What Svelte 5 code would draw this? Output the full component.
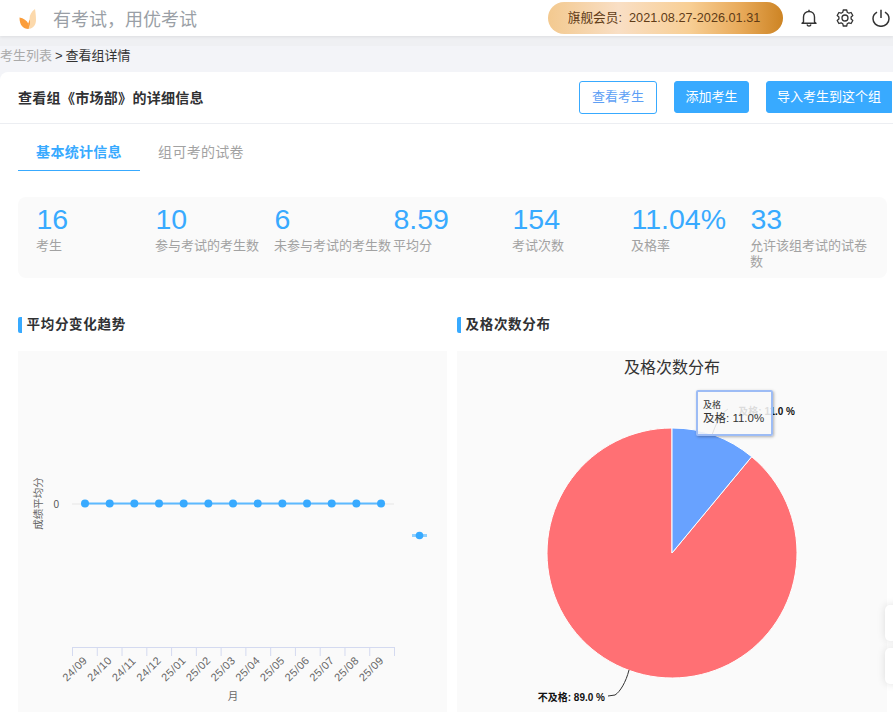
<script>
  const stats = [
    { value: '16', label: '考生' },
    { value: '10', label: '参与考试的考生数' },
    { value: '6', label: '未参与考试的考生数' },
    { value: '8.59', label: '平均分' },
    { value: '154', label: '考试次数' },
    { value: '11.04%', label: '及格率' },
    { value: '33', label: '允许该组考试的试卷数' }
  ];
  const months = ['24/09','24/10','24/11','24/12','25/01','25/02','25/03','25/04','25/05','25/06','25/07','25/08','25/09'];
  const ticks = Array.from({ length: 14 }, (_, i) => 72.5 + i * 24.77);
  const points = months.map((_, i) => 85 + i * 24.67);
</script>

<div class="page">
  <header class="topbar">
    <div class="brand">
      <svg class="logo" width="18" height="22" viewBox="0 0 18 22">
        <path d="M8.500 21C13 21 17 18 17 12C17 8 16.500 4 16 1C12.500 3.500 10.500 7 10.500 11C10.500 15 9.500 18 8.500 21Z" fill="#fcd9ac"/>
        <path d="M9.500 21C4 21 .5 17 .5 9.500C4.500 10 8 12.500 9.500 16C10.200 17.500 10 19.500 9.500 21Z" fill="#fb9d3a"/>
        <path d="M9 20.800C10.800 18 11.300 14.500 10.500 11.500C10 13 9.800 14.500 9.200 15.500C10 17.300 9.800 19.300 9 20.800Z" fill="#f98f23"/>
      </svg>
      <span class="site">有考试，用优考试</span>
    </div>
    <div class="tools">
      <div class="member">旗舰会员:&nbsp; 2021.08.27-2026.01.31</div>
      <svg class="tool bell" width="18" height="18" viewBox="0 0 18 18" fill="none" stroke="#333" stroke-width="1.400">
        <path d="M3.500 13V8C3.500 4.800 5.800 2.500 9 2.500C12.200 2.500 14.500 4.800 14.500 8V13L16 14.300H2L3.500 13Z" stroke-linejoin="round"/>
        <path d="M9 .8V2.500M7 15.500C7.300 16.600 8 17.100 9 17.100C10 17.100 10.700 16.600 11 15.500"/>
      </svg>
      <svg class="tool gear" width="18" height="18" viewBox="0 0 18 18" fill="none" stroke="#333" stroke-width="1.300">
        <path d="M7.300 1H10.700L11.200 3.200L12.900 4.200L15.100 3.500L16.800 6.500L15.100 8V10L16.800 11.500L15.100 14.500L12.900 13.800L11.200 14.800L10.700 17H7.300L6.800 14.800L5.100 13.800L2.900 14.500L1.200 11.500L2.900 10V8L1.200 6.500L2.900 3.500L5.100 4.200L6.800 3.200Z" stroke-linejoin="round"/>
        <circle cx="9" cy="9" r="3"/>
      </svg>
      <svg class="tool power" width="18" height="18" viewBox="0 0 18 18" fill="none" stroke="#333" stroke-width="1.500">
        <path d="M9 .8V9M5 3.200C2.600 4.600 1 6.900 1 9.700C1 14 4.600 17.300 9 17.300C13.400 17.300 17 14 17 9.700C17 6.900 15.400 4.600 13 3.200"/>
      </svg>
    </div>
  </header>
  <div class="strip"></div>

  <div class="crumbs"><span class="muted">考生列表</span><span class="sep">&gt;</span>查看组详情</div>

  <main class="card">
    <div class="head">
      <h1>查看组《市场部》的详细信息</h1>
      <div class="actions">
        <button class="btn outline">查看考生</button>
        <button class="btn solid">添加考生</button>
        <button class="btn solid wide">导入考生到这个组</button>
      </div>
    </div>

    <nav class="tabs">
      <span class="tab active">基本统计信息</span>
      <span class="tab">组可考的试卷</span>
    </nav>

    <section class="stats">
      {#each stats as s}
        <div class="stat">
          <div class="value">{s.value}</div>
          <div class="label">{s.label}</div>
        </div>
      {/each}
    </section>

    <section class="charts">
      <div class="chart-col">
        <h2>平均分变化趋势</h2>
        <div class="panel">
          <svg class="plot" viewBox="18 351 429 361" width="429" height="361">
            <text class="axis-name" transform="translate(42 503.500) rotate(-90)" text-anchor="middle">成绩平均分</text>
            <text class="axis-val" x="59" y="508" text-anchor="end">0</text>
            <line x1="72" x2="394" y1="504" y2="504" stroke="#e6e6e6"/>
            <line x1="85" x2="381" y1="503.500" y2="503.500" stroke="#5cb9ff" stroke-width="2"/>
            {#each points as x}
              <circle cx={x} cy="503.500" r="4" fill="#38aaff"/>
            {/each}
            <line x1="412" x2="427" y1="535.500" y2="535.500" stroke="#8fd0ff" stroke-width="3"/>
            <circle cx="419.500" cy="535.500" r="3.800" fill="#38aaff"/>
            <line x1="72" x2="394.500" y1="647.500" y2="647.500" stroke="#d4daf0"/>
            {#each ticks as x}
              <line x1={x} x2={x} y1="647" y2="656" stroke="#d4daf0"/>
            {/each}
            {#each months as m, i}
              <text class="month" transform="translate({67 + i * 24.7} 682) rotate(-45)">{m}</text>
            {/each}
            <text class="axis-name" x="233" y="700" text-anchor="middle">月</text>
          </svg>
        </div>
      </div>
      <div class="chart-col">
        <h2>及格次数分布</h2>
        <div class="panel">
          <svg class="plot" viewBox="457 351 430 361" width="430" height="361">
            <text class="pie-title" x="672" y="373" text-anchor="middle">及格次数分布</text>
            <path d="M672 553L672 428A125 125 0 1 0 751.700 456.700Z" fill="#ff7074" stroke="#fff"/>
            <path d="M672 553L672 428A125 125 0 0 1 751.700 456.700Z" fill="#68a2ff" stroke="#fff"/>
            <text class="pie-label" x="795" y="415" text-anchor="end">及格: 11.0 %</text>
            <path d="M712 435C716 424 720 414 728 409" fill="none" stroke="#333"/>
            <path d="M629 670C626 682 620 692 615 695L608 696" fill="none" stroke="#333"/>
            <text class="pie-label" x="605" y="701" text-anchor="end">不及格: 89.0 %</text>
          </svg>
          <div class="tip">
            <div class="tip-name">及格</div>
            <div class="tip-val">及格: 11.0%</div>
          </div>
        </div>
      </div>
    </section>
  </main>

  <div class="side one"></div>
  <div class="side two"></div>
</div>

<style>
  :global(html), :global(body) {
    margin: 0;
    height: 712px;
    overflow: hidden;
  }
  .page {
    position: relative;
    width: 893px;
    height: 712px;
    overflow: hidden;
    background: #f3f4f8;
    font-family: "Liberation Sans", "Noto Sans CJK SC", sans-serif;
    color: #333;
  }
  .topbar {
    height: 36px;
    background: #fff;
    display: flex;
    justify-content: space-between;
    align-items: center;
    position: relative;
    box-shadow: 0 1px 3px rgba(0, 0, 0, .08);
  }
  .strip {
    height: 10px;
    background: #eff0f3;
  }
  .brand {
    display: flex;
    align-items: center;
    padding-left: 19px;
  }
  .logo { margin-top: 1px; }
  .site {
    margin-left: 16px;
    font-size: 18px;
    color: #9a9fa6;
  }
  .tools {
    display: flex;
    align-items: center;
    height: 36px;
  }
  .member {
    width: 235px;
    height: 32px;
    line-height: 32px;
    box-sizing: border-box;
    padding-right: 3px;
    text-align: center;
    white-space: nowrap;
    border-radius: 16px;
    font-size: 12.700px;
    color: #5f3b16;
    background: linear-gradient(90deg, #f3c98f 0%, #f9dfc5 30%, #f8cf95 60%, #e8aa5a 82%, #cd8424 100%);
  }
  .tool { flex: none; }
  .bell { margin-left: 17px; }
  .gear { margin-left: 18px; }
  .power { margin-left: 18px; margin-right: 3px; }
  .crumbs {
    height: 17px;
    margin-top: 1px;
    font-size: 13px;
    line-height: 17px;
    color: #333;
  }
  .muted { color: #aaa; }
  .sep { margin: 0 3px 0 3px; }
  .card {
    margin-top: 8px;
    height: 640px;
    background: #fff;
    border-radius: 8px 0 0 0;
  }
  .head {
    height: 51px;
    display: flex;
    justify-content: space-between;
    align-items: center;
    border-bottom: 1px solid #eceef2;
    padding-left: 18px;
  }
  h1 {
    margin: 0 0 2px;
    font-size: 14px;
    font-weight: 700;
    letter-spacing: .3px;
    color: #303133;
  }
  .actions {
    display: flex;
    gap: 17px;
    align-items: center;
    margin-bottom: 2px;
  }
  .btn {
    height: 32px;
    border-radius: 3px;
    font: 13px "Liberation Sans", "Noto Sans CJK SC", sans-serif;
    border: 1px solid #38aaff;
    padding: 0 0 3px;
    width: 78px;
    background: #38aaff;
    color: #fff;
    margin-top: 1px;
  }
  .btn.outline {
    background: #fff;
    color: #5d9ff5;
    height: 33px;
  }
  .btn.solid { width: 75px; }
  .btn.wide { width: 126px; margin-right: 1px; border-radius: 3px 0 0 3px; }
  .tabs {
    display: flex;
    margin-left: 18px;
    height: 47px;
  }
  .tab {
    width: 122px;
    height: 47px;
    line-height: 56px;
    box-sizing: border-box;
    text-align: center;
    font-size: 14px;
    letter-spacing: .3px;
    color: #a2a2a2;
  }
  .tab.active {
    color: #38aaff;
    font-weight: 700;
    border-bottom: 1px solid #38aaff;
  }
  .stats {
    margin: 26px 6px 0 18px;
    height: 81px;
    background: #fafafa;
    border-radius: 8px;
    padding-left: 19px;
    display: grid;
    grid-template-columns: repeat(7, 119px);
    box-sizing: border-box;
  }
  .value {
    margin: 7px 0 0 -.5px;
    font-size: 28.500px;
    line-height: 30px;
    color: #38aaff;
  }
  .label {
    font-size: 13px;
    line-height: 16px;
    margin-top: 4px;
    color: #a2a2a2;
    margin-left: -1px;
  }
  .stat:nth-child(7) .label { width: 118px; }
  .charts {
    display: flex;
    gap: 10px;
    margin: 39px 6px 0 18px;
  }
  .chart-col { width: 429px; }
  .chart-col:last-child { width: 430px; }
  h2 {
    margin: 0 0 18px;
    height: 16px;
    line-height: 16px;
    border-left: 4px solid #38aaff;
    border-radius: 2px 0 0 2px;
    padding-left: 4.500px;
    font-size: 13.500px;
    letter-spacing: .7px;
    font-weight: 700;
    color: #303133;
  }
  .panel {
    position: relative;
    height: 361px;
    background: #fafafa;
  }
  .plot { display: block; }
  .axis-name { font-size: 10.500px; fill: #666; }
  .axis-val { font-size: 10px; fill: #555; }
  .month { font-size: 11px; letter-spacing: .4px; fill: #666; }
  .pie-title { font-size: 16px; fill: #333; }
  .pie-label { font-size: 10px; font-weight: 700; fill: #111; }
  .tip {
    position: absolute;
    left: 239px;
    top: 39px;
    width: 77px;
    height: 46px;
    box-sizing: border-box;
    border: 2px solid #9dbcf5;
    border-radius: 2px;
    background: rgba(248, 248, 248, .88);
    box-shadow: 1px 1px 3px rgba(0, 0, 0, .3);
    padding: 8px 0 0 5px;
    color: #333;
  }
  .tip-name { font-size: 9px; line-height: 11px; }
  .tip-val { font-size: 11.500px; line-height: 15px; white-space: nowrap; }
  .side {
    position: absolute;
    left: 885px;
    width: 20px;
    height: 36px;
    background: #fff;
    border-radius: 5px;
    box-shadow: 0 0 8px rgba(0, 0, 0, .12);
  }
  .one { top: 605px; }
  .two { top: 648px; }
</style>
